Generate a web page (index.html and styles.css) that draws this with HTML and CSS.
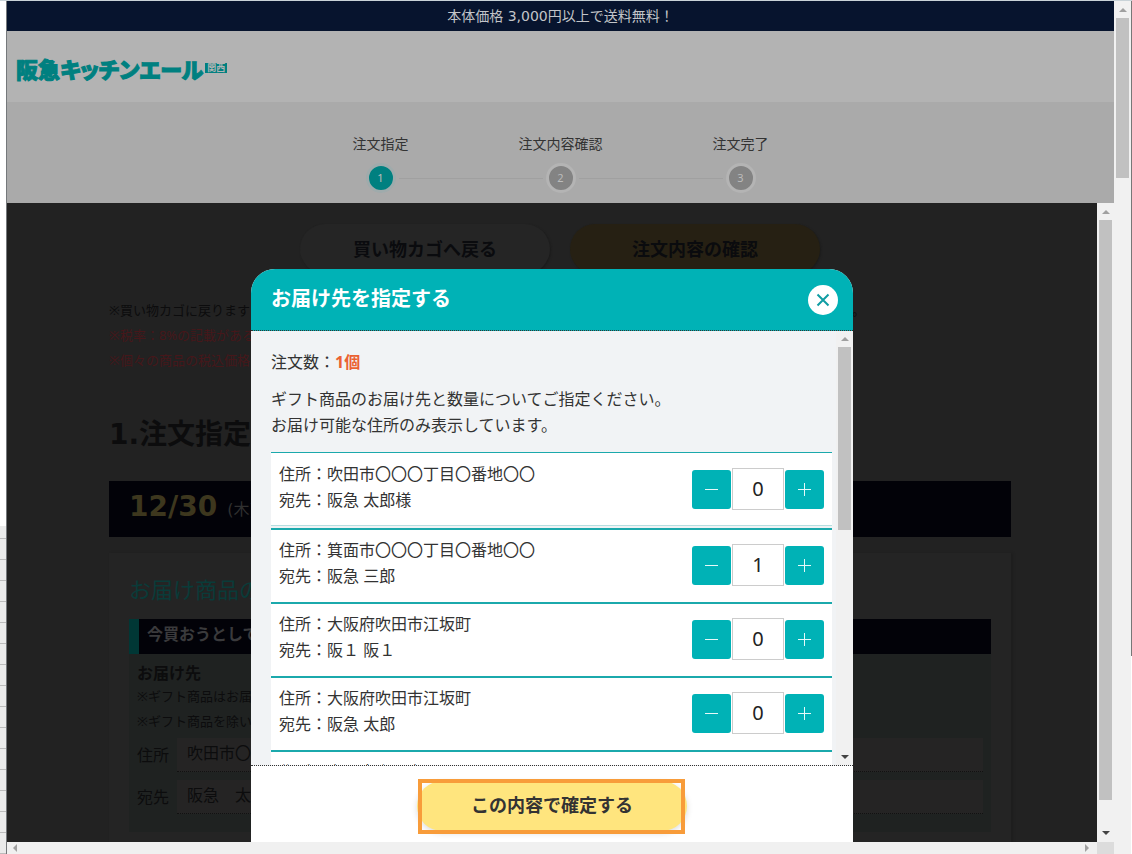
FILE: index.html
```html
<!DOCTYPE html>
<html lang="ja">
<head>
<meta charset="utf-8">
<title>お届け先を指定する | 阪急キッチンエール</title>
<link rel="stylesheet" href="styles.css">
</head>
<body>
<div class="window">
  <div class="gutter"></div>
  <div class="view">
    <p class="notice">本体価格 3,000円以上で送料無料！</p>
    <header class="header">
      <a class="logo" href="#"><span class="logo-name">阪急<span class="logo-kana">キッチンエール</span></span><span class="logo-area">関西</span></a>
    </header>
    <nav class="progress" aria-label="注文の流れ">
      <ol class="steps">
        <li class="step current"><span class="step-label">注文指定</span><span class="step-mark"><b>1</b></span></li>
        <li class="step"><span class="step-label">注文内容確認</span><span class="step-mark"><b>2</b></span></li>
        <li class="step"><span class="step-label">注文完了</span><span class="step-mark"><b>3</b></span></li>
      </ol>
    </nav>
    <div class="content">
      <div class="stage">
        <main class="order">
          <div class="order-actions">
            <button class="pill" type="button">買い物カゴへ戻る</button>
            <button class="pill pill-gold" type="button">注文内容の確認</button>
          </div>
          <div class="notes">
            <p class="note note-split"><span>※買い物カゴに戻ります</span><span>。</span></p>
            <p class="note note-red">※税率：8%の記載がある</p>
            <p class="note note-red">※個々の商品の税込価格</p>
          </div>
          <h1 class="title">1.注文指定</h1>
          <div class="date-bar"><strong>12/30</strong><span>(木)</span></div>
          <section class="panel">
            <h2 class="panel-title">お届け商品の</h2>
            <h3 class="panel-bar">今買おうとして</h3>
            <div class="group">
              <h4 class="group-title">お届け先</h4>
              <p class="group-note">※ギフト商品はお届</p>
              <p class="group-note">※ギフト商品を除い</p>
              <div class="fields">
                <label for="addr">住所</label><input id="addr" type="text" value="吹田市〇〇〇丁目〇番地〇〇" readonly>
                <label for="name">宛先</label><input id="name" type="text" value="阪急　太郎" readonly>
              </div>
            </div>
          </section>
        </main>
        <div class="overlay">
          <section class="modal" role="dialog" aria-labelledby="modal-title">
            <header class="modal-head">
              <h2 id="modal-title">お届け先を指定する</h2>
              <button class="close" type="button" aria-label="閉じる">
                <svg width="14" height="14" viewBox="0 0 14 14"><path d="M1.500 1.500l11 11M12.500 1.500l-11 11" fill="none" stroke="#109da3" stroke-width="2"/></svg>
              </button>
            </header>
            <div class="modal-body">
              <div class="modal-scroll">
                <p class="count">注文数：<strong>1個</strong></p>
                <p class="lead">ギフト商品のお届け先と数量についてご指定ください。<br>お届け可能な住所のみ表示しています。</p>
                <ul class="list">
                  <li class="row row-first">
                    <div>住所：吹田市〇〇〇丁目〇番地〇〇<br>宛先：阪急 太郎様</div>
                    <div class="stepper"><button type="button" aria-label="減らす"><svg class="sign" viewBox="0 0 13 13"><path d="M0 6.500h13"/></svg></button><input type="text" value="0" aria-label="数量"><button type="button" aria-label="増やす"><svg class="sign" viewBox="0 0 13 13"><path d="M0 6.500h13M6.500 0v13"/></svg></button></div>
                  </li>
                  <li class="row">
                    <div>住所：箕面市〇〇〇丁目〇番地〇〇<br>宛先：阪急 三郎</div>
                    <div class="stepper"><button type="button" aria-label="減らす"><svg class="sign" viewBox="0 0 13 13"><path d="M0 6.500h13"/></svg></button><input type="text" value="1" aria-label="数量"><button type="button" aria-label="増やす"><svg class="sign" viewBox="0 0 13 13"><path d="M0 6.500h13M6.500 0v13"/></svg></button></div>
                  </li>
                  <li class="row">
                    <div>住所：大阪府吹田市江坂町<br>宛先：阪１ 阪１</div>
                    <div class="stepper"><button type="button" aria-label="減らす"><svg class="sign" viewBox="0 0 13 13"><path d="M0 6.500h13"/></svg></button><input type="text" value="0" aria-label="数量"><button type="button" aria-label="増やす"><svg class="sign" viewBox="0 0 13 13"><path d="M0 6.500h13M6.500 0v13"/></svg></button></div>
                  </li>
                  <li class="row">
                    <div>住所：大阪府吹田市江坂町<br>宛先：阪急 太郎</div>
                    <div class="stepper"><button type="button" aria-label="減らす"><svg class="sign" viewBox="0 0 13 13"><path d="M0 6.500h13"/></svg></button><input type="text" value="0" aria-label="数量"><button type="button" aria-label="増やす"><svg class="sign" viewBox="0 0 13 13"><path d="M0 6.500h13M6.500 0v13"/></svg></button></div>
                  </li>
                  <li class="row row-last">
                    <div>住所：大阪府吹田市</div>
                  </li>
                </ul>
              </div>
              <div class="bar bar-modal">
                <svg class="arrow" viewBox="0 0 8 4"><path d="M0 4l4-4 4 4z" fill="#a0a0a0"/></svg>
                <div class="track"><div class="thumb thumb-modal"></div></div>
                <svg class="arrow" viewBox="0 0 8 4"><path d="M0 0l4 4 4-4z" fill="#444"/></svg>
              </div>
            </div>
            <footer class="modal-foot">
              <div class="confirm-box"><button class="confirm" type="button">この内容で確定する</button><span class="highlight"></span></div>
            </footer>
          </section>
        </div>
      </div>
      <div class="bar">
        <svg class="arrow" viewBox="0 0 8 4"><path d="M0 4l4-4 4 4z" fill="#a0a0a0"/></svg>
        <div class="track"><div class="thumb thumb-inner"></div></div>
        <svg class="arrow" viewBox="0 0 8 4"><path d="M0 0l4 4 4-4z" fill="#444"/></svg>
      </div>
    </div>
    <div class="hbar">
      <svg width="4" height="8" viewBox="0 0 4 8"><path d="M4 0L0 4l4 4z" fill="#a0a0a0"/></svg>
      <svg width="4" height="8" viewBox="0 0 4 8"><path d="M0 0l4 4-4 4z" fill="#a0a0a0"/></svg>
      <div class="corner"></div>
    </div>
  </div>
  <div class="bar bar-outer">
    <svg class="arrow" viewBox="0 0 8 4"><path d="M0 4l4-4 4 4z" fill="#a0a0a0"/></svg>
    <div class="track"><div class="thumb thumb-outer"></div></div>
  </div>
  <div class="edge"></div>
</div>
</body>
</html>
```

FILE: styles.css
```css
* {
  box-sizing: border-box;
}

body {
  margin: 0;
  background: #fff;
  color: #333;
  font-family: "Noto Sans", "Noto Sans CJK JP", sans-serif;
  font-size: 16px;
  line-height: 26px;
}

h1, h2, h3, h4, p, ol, ul {
  margin: 0;
  padding: 0;
}

ol, ul {
  list-style: none;
}

button, input {
  margin: 0;
  padding: 0;
  border: 0;
  font-family: inherit;
}

svg {
  display: block;
}

/* Window frame */

.window {
  display: grid;
  grid-template-columns: 7px 1fr 17px 1px;
  height: 100vh;
  border-top: 1px solid #c9d3d8;
}

.gutter {
  display: flex;
  flex-direction: column;
  border-right: 1px solid #75787b;
}

.gutter::before {
  content: "";
  height: 525px;
}

.gutter::after {
  content: "";
  flex: 1;
  background: repeating-linear-gradient(#ebebeb 0, #ebebeb 12px, #bcbcbc 12px, #bcbcbc 13px, #ebebeb 13px, #ebebeb 21px);
}

.edge {
  height: 655px;
  background: #777;
}

.view {
  display: flex;
  flex-direction: column;
  min-width: 0;
  min-height: 0;
}

/* Page top */

.notice {
  background: #07142e;
  color: #c2c4c8;
  font-family: "DejaVu Sans", "Noto Sans CJK JP", sans-serif;
  font-size: 14px;
  line-height: 30px;
  text-align: center;
}

.header {
  display: flex;
  align-items: center;
  height: 71px;
  padding: 2px 9px 0;
  background: #b3b3b3;
}

.logo {
  display: flex;
  align-items: center;
  gap: 2px;
  color: #008080;
  text-decoration: none;
}

.logo-name {
  font-size: 22px;
  font-weight: 900;
  font-family: "Noto Sans CJK JP", sans-serif;
  font-feature-settings: "palt";
  -webkit-text-stroke: 1px #008080;
}

.logo-area {
  padding: 0 2px;
  background: #008080;
  color: #b3b3b3;
  font-size: 9px;
  font-weight: 700;
  line-height: 10px;
}

.progress {
  flex-shrink: 0;
  display: flex;
  justify-content: center;
  height: 101px;
  padding-top: 31px;
  background: #aaa;
}

.steps {
  display: grid;
  grid-template-columns: repeat(3, 180px);
}

.step-label {
  display: block;
  font-size: 14px;
  line-height: 22px;
  text-align: center;
}

.step-mark {
  display: flex;
  align-items: center;
  gap: 3px;
  margin-top: 8px;
}

.step-mark::before,
.step-mark::after {
  content: "";
  flex: 1;
  height: 1px;
  background: #a0a0a0;
}

.step:first-child .step-mark::before,
.step:last-child .step-mark::after {
  background: transparent;
}

.step-mark b {
  width: 30px;
  height: 30px;
  border: 3px solid #b4b4b4;
  border-radius: 50%;
  background: #838383;
  color: #bcbcbc;
  font-size: 11px;
  font-weight: 400;
  line-height: 23px;
  text-align: center;
}

.current .step-mark b {
  border-color: #9fabac;
  background: #008080;
}

/* Order page */

.content {
  flex: 1;
  display: flex;
  min-height: 0;
}

.stage {
  position: relative;
  flex: 1;
  min-width: 0;
  overflow: hidden;
  background: #222;
}

.order {
  padding: 21px 86px 0 102px;
  color: #0c0c0d;
}

.order-actions {
  display: flex;
  justify-content: center;
  gap: 20px;
}

.pill {
  width: 250px;
  height: 50px;
  border-radius: 25px;
  background: #252525;
  box-shadow: 1px 1px 2px #1b1b1b;
  color: #0a0b0e;
  font-size: 18px;
  font-weight: 700;
  line-height: 48px;
}

.pill-gold {
  background: #262013;
}

.notes {
  max-width: 756px;
  margin-top: 24px;
}

.note {
  font-size: 13px;
  line-height: 25px;
}

.note-split {
  display: flex;
  justify-content: space-between;
}

.note-red {
  color: #46171a;
}

.title {
  margin-top: 42px;
  font-family: "DejaVu Sans", "Noto Sans CJK JP", sans-serif;
  font-size: 28px;
  line-height: 40px;
}

.date-bar {
  display: flex;
  align-items: center;
  gap: 10px;
  height: 56px;
  margin-top: 26px;
  padding: 0 20px 4px;
  background: #020208;
  color: #303030;
  font-family: "DejaVu Sans", "Noto Sans CJK JP", sans-serif;
}

.date-bar strong {
  color: #3d371e;
  font-size: 28px;
}

.date-bar span {
  padding-top: 6px;
}

.panel {
  margin-top: 16px;
  padding: 20px 20px 40px;
  background: #242424;
  box-shadow: 2px 0 2px #1e1e1e;
}

.panel-title {
  color: #0a3b39;
  font-size: 22px;
  font-weight: 400;
  line-height: 32px;
}

.panel-bar {
  height: 35px;
  margin-top: 14px;
  padding-left: 8px;
  border-left: 10px solid #003735;
  background: #020208;
  color: #3a3a3c;
  font-size: 16px;
  line-height: 31px;
}

.group {
  padding: 8px 8px 18px;
  background: #1f2221;
}

.group-title {
  font-size: 16px;
  line-height: 22px;
}

.group-note {
  font-size: 13px;
  line-height: 25px;
}

.fields {
  display: grid;
  grid-template-columns: 32px 1fr;
  gap: 8px;
  align-items: center;
  margin-top: 4px;
}

.fields label {
  line-height: 32px;
}

.fields input {
  height: 34px;
  padding: 0 10px 6px;
  border-bottom: 1px dotted #111;
  background: #252424;
  color: #0c0c0d;
  font-size: 16px;
}

/* Dialog */

.overlay {
  position: absolute;
  inset: 66px 0 0;
  display: flex;
  justify-content: center;
}

.modal {
  display: flex;
  flex-direction: column;
  width: 602px;
  overflow: hidden;
  border-radius: 24px 24px 0 0;
  background: #fff;
}

.modal-head {
  display: flex;
  justify-content: space-between;
  align-items: center;
  height: 62px;
  padding: 0 15px 0 20px;
  border-bottom: 1px dotted #333;
  background: #00b2b6;
  color: #fff;
}

.modal-head h2 {
  padding-bottom: 2px;
  font-size: 20px;
  line-height: 30px;
  font-weight: 700;
}

.close {
  display: grid;
  place-items: center;
  width: 30px;
  height: 30px;
  border-radius: 50%;
  background: #fff;
}

.modal-body {
  flex: 1;
  display: flex;
  min-height: 0;
  border-bottom: 1px dotted #333;
  background: #f1f3f5;
}

.modal-scroll {
  flex: 1;
  padding: 18px 4px 0 20px;
  overflow: hidden;
}

.count strong {
  color: #eb6132;
}

.lead {
  margin: 11px 0 14px;
}

.row {
  display: flex;
  justify-content: space-between;
  align-items: center;
  min-height: 74px;
  padding: 7px 8px 13px;
  border-top: 2px solid #1ba9ac;
  background: #fff;
}

.row-first {
  margin-bottom: 2px;
  padding-top: 8px;
  padding-bottom: 12px;
  border-top-width: 1px;
  border-bottom: 1px solid #b5dfe0;
}

.row-last {
  align-items: flex-start;
}

.stepper {
  display: flex;
  align-items: center;
  gap: 1px;
  margin: -4px 0 -8px;
}

.stepper button {
  display: grid;
  place-items: center;
  width: 39px;
  height: 39px;
  border-radius: 3px;
  background: #00b2b6;
}

.stepper input {
  width: 52px;
  height: 42px;
  padding-bottom: 2px;
  border: 1px solid #ccc;
  background: #fff;
  color: #222;
  font-size: 20px;
  text-align: center;
}

.sign {
  width: 13px;
  height: 13px;
  fill: none;
  stroke: #e6f9f9;
  stroke-width: 1;
}

.modal-foot {
  display: flex;
  justify-content: center;
  padding: 15px 0 11px;
}

.confirm-box {
  position: relative;
}

.confirm {
  width: 270px;
  height: 50px;
  padding-bottom: 2px;
  border-radius: 25px;
  background: #ffe57e;
  box-shadow: 0 2px 6px rgba(0, 0, 0, 0.15);
  color: #333;
  font-size: 18px;
  font-weight: 700;
  line-height: 48px;
}

/* Frame drawn over the confirm button */
.highlight {
  position: absolute;
  inset: -2px 2px -3px 1px;
  border: 4px solid #f89c3a;
  pointer-events: none;
}

/* Scroll bars */

.bar {
  display: flex;
  flex-direction: column;
  align-items: center;
  width: 17px;
  padding: 7px 0;
  background: #f1f1f1;
}

.bar-modal {
  padding: 6px 0;
}

.arrow {
  width: 8px;
  height: 4px;
}

.track {
  flex: 1;
  padding: 6px 0;
}

.thumb {
  width: 13px;
  background: #c1c1c1;
}

.thumb-outer {
  height: 160px;
}

.thumb-inner {
  height: 580px;
}

.thumb-modal {
  height: 183px;
}

.hbar {
  display: flex;
  align-items: center;
  justify-content: space-between;
  gap: 8px;
  height: 12px;
  padding-left: 6px;
  background: #f0f0f0;
}

.hbar svg + svg {
  margin-left: auto;
}

.corner {
  width: 17px;
  height: 12px;
  background: #dcdcdc;
}
```
